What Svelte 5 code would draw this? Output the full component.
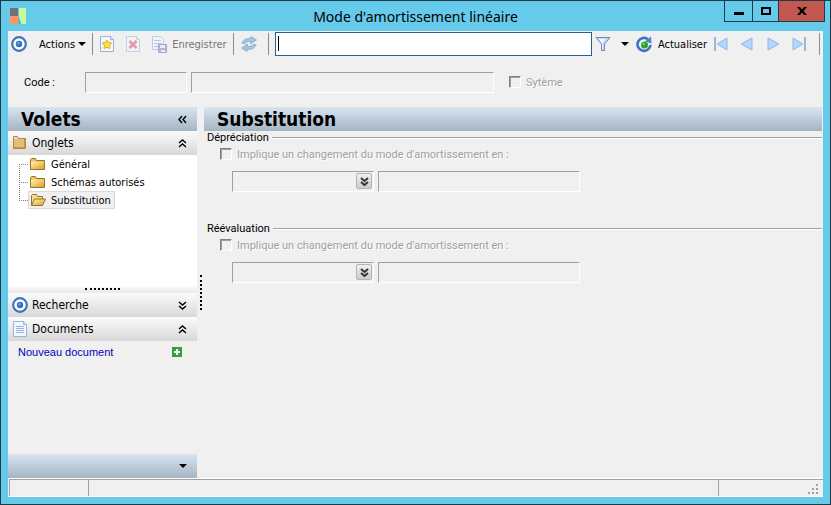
<script>
	let code = $state("");
	let label = $state("");
	let search = $state("");
	let current = $state("Substitution");
	let open = $state({ tabs: true, search: false, docs: true });

	const tabs = ["Général", "Schémas autorisés", "Substitution"];
	const groups = ["Dépréciation", "Réévaluation"];

	const nav = [
		{ name: "Premier", tri: "M14 2v12L4 8z", bar: 1 },
		{ name: "Précédent", tri: "M13 2v12L2 8z" },
		{ name: "Suivant", tri: "M3 2v12l11-6z" },
		{ name: "Dernier", tri: "M2 2v12l10-6z", bar: 13 },
	];
</script>

{#snippet target()}
	<svg width="16" height="16" viewBox="0 0 16 16" aria-hidden="true">
		<circle cx="8" cy="8" r="6.8" fill="#fff" stroke="#4173bd" stroke-width="2.2" />
		<circle cx="8" cy="8" r="3.2" fill="#2f70c4" />
		<circle cx="7.4" cy="7.2" r="1.3" fill="#69a6e5" />
	</svg>
{/snippet}

{#snippet page()}
	<path d="M1.5 .5h10l3 3v12h-13z" fill="#f1f6ff" stroke="#9db2d6" />
	<path d="M11.5 .5v3h3" fill="#d5e3f8" stroke="#9db2d6" />
{/snippet}

{#snippet folder(opened)}
	<svg width="16" height="14" viewBox="0 0 16 14" aria-hidden="true">
		<defs>
			<linearGradient id="gold" x1="0" y1="0" x2="1" y2="1">
				<stop offset="0" stop-color="#fff3b4" />
				<stop offset="1" stop-color="#dda126" />
			</linearGradient>
		</defs>
		{#if opened}
			<path d="M1.5 12.5v-10l1-1h4l1 2h5v3" fill="#f8dc83" stroke="#98732b" />
			<path d="M1.5 12.5l3-6.500h11l-3 6.500z" fill="url(#gold)" stroke="#98732b" />
		{:else}
			<path d="M.5 12.5v-10l1-1h4l1 2h8v9z" fill="#eac15c" stroke="#98732b" />
			<path d="M1 4.500h13v7.500H1z" fill="url(#gold)" />
		{/if}
	</svg>
{/snippet}

{#snippet root()}
	<svg width="16" height="14" viewBox="0 0 16 14" aria-hidden="true">
		<path d="M1.5 12.5v-12h4l1 2h7v10z" fill="#e2bf78" stroke="#b08a45" />
		<path d="M2 1h3l1 2H2z" fill="#f5dda0" />
		<path d="M12.5 3v9M2 11.5h11" stroke="#c79a42" />
	</svg>
{/snippet}

{#snippet chevrons(up)}
	<svg class="chev" width="9" height="9" viewBox="0 0 9 9" aria-hidden="true">
		<path d={up ? "M1 4l3.500-3 3.500 3M1 8l3.500-3 3.500 3" : "M1 1l3.500 3 3.500-3M1 5l3.500 3 3.500-3"} />
	</svg>
{/snippet}

<div class="window">
	<header class="titlebar">
		<svg class="logo" width="16" height="16" viewBox="0 0 16 16" aria-hidden="true">
			<path d="M0 0h8v8H0z" fill="#707378" />
			<path d="M0 8h8v8H0z" fill="#fb9566" />
			<path d="M9 0h7v16h-5L9 9z" fill="#c7fa9c" />
			<path d="M8 8l3 8H9z" fill="#689baa" />
		</svg>
		<h1>Mode d'amortissement linéaire</h1>
		<div class="controls">
			<button aria-label="Réduire"><svg width="10" height="10"><path d="M0 6h10v3H0z" /></svg></button>
			<button aria-label="Agrandir"><svg width="10" height="8"><path d="M1 1h8v6H1z" fill="none" stroke="#000" stroke-width="2" /></svg></button>
			<button class="close" aria-label="Fermer"><svg width="10" height="8"><path d="M0 0h3l2 2.500L7 0h3L6.600 4 10 8H7L5 5.500 3 8H0l3.400-4z" /></svg></button>
		</div>
	</header>

	<div class="client">
		<div class="toolbar">
			<button class="tool" aria-label="Cible">{@render target()}</button>
			<button class="tool actions">Actions <span class="arrow"></span></button>
			<span class="sep"></span>
			<div class="edit">
				<button class="tool" aria-label="Nouveau">
					<svg width="16" height="16" viewBox="0 0 16 16">
						{@render page()}
						<path d="M8 4l1.600 2.600 3 .4-2 2.200.4 3.300L8 11.300l-3 1.200.4-3.300-2-2.200 3-.4z" fill="#ffe13b" stroke="#d4b62d" />
					</svg>
				</button>
				<button class="tool off" aria-label="Supprimer" disabled>
					<svg width="16" height="16" viewBox="0 0 16 16">
						{@render page()}
						<path d="M4.500 5l7 7M11.5 5l-7 7" stroke="#cf4c5d" stroke-width="2.6" />
					</svg>
				</button>
				<button class="tool save" disabled>
					<svg class="off" width="17" height="17" viewBox="0 0 17 17" aria-hidden="true">
						<path d="M1.5 .5h8l3 3v10h-11z" fill="#f1f6ff" stroke="#8fabd8" />
						<path d="M3 4.500h7M3 7.500h8M3 10.500h5" stroke="#7f9fd0" />
						<path d="M7.500 8.500h8v8h-8z" fill="#7080b8" stroke="#5669a6" />
						<path d="M9 9h5v3H9zM10 14h4v2h-4z" fill="#e6ebfa" />
					</svg>
					Enregistrer
				</button>
			</div>
			<span class="sep"></span>
			<button class="tool sync" aria-label="Recharger">
				<svg width="18" height="16" viewBox="0 0 18 16">
					<g fill="#a4c3e2" stroke="#86a8ce" stroke-width=".8">
						<path d="M2 7.500C3 4 6 2 10.500 2.500L11 .5l5.500 3.500-6 4 .2-2.300C8 5 6 6 5 7.500z" />
						<path d="M16 8.500c-1 3.500-4 5.500-8.500 5L7 15.500 1.500 12l6-4-.2 2.300C10 11 12 10 13 8.500z" />
					</g>
				</svg>
			</button>
			<span class="sep"></span>
			<div class="search">
				<input type="text" aria-label="Recherche" bind:value={search} />
				{#if !search}<span class="caret"></span>{/if}
			</div>
			<button class="tool" aria-label="Filtrer">
				<svg width="16" height="16" viewBox="0 0 16 16">
					<path d="M1 1.500h14L9.500 8v6.500h-3V8z" fill="#c3daf7" stroke="#7189b0" />
					<path d="M4 3h6L7.800 7v6h-.6V7z" fill="#f5faff" />
				</svg>
			</button>
			<button class="tool drop" aria-label="Filtres"><span class="arrow"></span></button>
			<button class="tool refresh">
				<svg width="17" height="17" viewBox="0 0 17 17" aria-hidden="true">
					<path d="M12 3.200A6.500 6.500 0 1 0 14.500 9" fill="none" stroke="#3c72c2" stroke-width="2.6" />
					<path d="M9 5.500L15 .5l.5 7z" fill="#4b83cf" />
					<circle cx="8.500" cy="9" r="3.500" fill="#27a62d" />
					<circle cx="7.500" cy="8" r="1.300" fill="#6ed66a" />
				</svg>
				Actualiser
			</button>
			<div class="nav">
				{#each nav as item}
					<button class="tool" aria-label={item.name}>
						<svg width="16" height="16" viewBox="0 0 16 16">
							<path d={item.tri} fill="#b3d8fb" stroke="#8bb9eb" />
							{#if item.bar}<path d="M{item.bar} 1h2v14h-2z" fill="#9db5d3" />{/if}
						</svg>
					</button>
				{/each}
			</div>
			<span class="sep last"></span>
		</div>

		<div class="ident">
			<label for="code">Code :</label>
			<input id="code" class="field short" type="text" bind:value={code} disabled />
			<input class="field long" type="text" aria-label="Libellé" bind:value={label} disabled />
			<label class="check system"><input type="checkbox" disabled /><span>Sytème</span></label>
		</div>

		<div class="body">
			<aside>
				<div class="bar">
					<h2>Volets</h2>
					<button class="collapse" aria-label="Replier">
						<svg class="chev" width="9" height="9" viewBox="0 0 9 9"><path d="M4 1L1 4.500 4 8M8 1L5 4.500 8 8" /></svg>
					</button>
				</div>

				<button class="section" onclick={() => (open.tabs = !open.tabs)}>
					{@render root()}
					<span>Onglets</span>
					{@render chevrons(open.tabs)}
				</button>
				{#if open.tabs}
					<ul class="tree">
						{#each tabs as tab}
							<li>
								<button class:selected={current == tab} onclick={() => (current = tab)}>
									{@render folder(current == tab)}
									<span>{tab}</span>
								</button>
							</li>
						{/each}
					</ul>
				{/if}
				<div class="grip"></div>

				<button class="section" onclick={() => (open.search = !open.search)}>
					{@render target()}
					<span>Recherche</span>
					{@render chevrons(open.search)}
				</button>
				<button class="section" onclick={() => (open.docs = !open.docs)}>
					<svg width="16" height="16" viewBox="0 0 16 16" aria-hidden="true">
						{@render page()}
						<path d="M4 5.500h8M4 7.500h8M4 9.500h8M4 11.500h8" stroke="#94b4e4" />
					</svg>
					<span>Documents</span>
					{@render chevrons(open.docs)}
				</button>
				{#if open.docs}
					<div class="doc">
						<a href="#nouveau">Nouveau document</a>
						<button class="add" aria-label="Ajouter">
							<svg width="10" height="10"><path d="M0 0h10v10H0z" fill="#3f9b35" /><path d="M4 2h2v2h2v2H6v2H4V6H2V4h2z" fill="#fff" /></svg>
						</button>
					</div>
				{/if}
				<div class="bar foot">
					<button class="collapse" aria-label="Plus de volets"><span class="arrow"></span></button>
				</div>
			</aside>

			<div class="splitter"></div>

			<main>
				<div class="bar"><h2>{current}</h2></div>
				{#each groups as group}
					<section class="group">
						<h3>{group}</h3>
						<label class="check"><input type="checkbox" disabled /><span>Implique un changement du mode d'amortissement en :</span></label>
						<div class="row">
							<div class="combo">
								<select class="field" aria-label="Mode {group}" disabled><option></option></select>
								<span class="combo-btn">{@render chevrons(false)}</span>
							</div>
							<input class="field wide" type="text" aria-label="Libellé {group}" disabled />
						</div>
					</section>
				{/each}
			</main>
		</div>

		<footer class="status">
			<span class="first"></span>
			<span class="middle"></span>
			<span class="end">
				<svg width="11" height="11" viewBox="0 0 11 11" aria-hidden="true">
					<path d="M8 0h2v2H8zM8 4h2v2H8zM4 4h2v2H4zM8 8h2v2H8zM4 8h2v2H4zM0 8h2v2H0z" fill="#a0a0a0" />
				</svg>
			</span>
		</footer>
	</div>
</div>

<style>
:global(body) {
  margin: 0;
}

.window {
  display: flex;
  flex-direction: column;
  box-sizing: border-box;
  min-height: 100vh;
  padding: 0 7px 7px;
  border: 1px solid #1f3b49;
  background: #66caea;
  color: #000;
  font-family: "DejaVu Sans Condensed", "DejaVu Sans", sans-serif;
  font-size: 12px;
}

button {
  display: flex;
  align-items: center;
  margin: 0;
  padding: 0;
  border: 0;
  background: none;
  color: inherit;
  font: inherit;
}

svg {
  display: block;
  flex: none;
}

h1, h2, h3 {
  margin: 0;
}

/* title bar */
.titlebar {
  display: grid;
  grid-template-columns: 1fr auto 1fr;
  align-items: center;
  height: 30px;
}

.logo {
  margin-left: 2px;
}

h1 {
  font: 14px "Noto Sans", sans-serif;
}

.controls {
  display: flex;
  justify-self: end;
  align-self: start;
  margin-right: -2px;
  border: 1px solid #1f3b49;
  border-top: 0;
}

.controls button {
  justify-content: center;
  width: 27px;
  height: 20px;
}

.controls button + button {
  width: 26px;
  border-left: 1px solid #1f3b49;
}

.controls .close {
  width: 46px;
  background: #c35850;
}

/* toolbar */
.client {
  display: flex;
  flex: 1;
  flex-direction: column;
  background: #f0f0f0;
}

.toolbar {
  display: flex;
  align-items: center;
  height: 26px;
  padding: 0 3px;
  font-size: 11px;
}

.actions {
  gap: 3px;
  margin-left: 12px;
}

.arrow {
  border: 4px solid transparent;
  border-top-color: #000;
  border-bottom: 0;
}

.sep {
  width: 1px;
  height: 22px;
  margin: 0 6px;
  background: #8c8c8c;
}

.sep.last {
  margin: 0 0 0 auto;
}

.edit {
  display: flex;
  gap: 10px;
}

.off {
  opacity: .5;
}

.save {
  gap: 4px;
  color: #777;
}

.sync {
  margin-right: 4px;
}

.search {
  display: flex;
  flex: 1;
  position: relative;
  margin-right: 3px;
}

.search input {
  width: 100%;
  height: 24px;
  box-sizing: border-box;
  padding: 0 4px;
  border: 1px solid #2b5f94;
  background: #fff;
  font: inherit;
  outline: 0;
}

.caret {
  position: absolute;
  top: 4px;
  left: 3px;
  width: 1px;
  height: 15px;
  background: #000;
}

.drop {
  margin: 0 7px 0 10px;
}

.refresh {
  gap: 5px;
}

.nav {
  display: flex;
  gap: 10px;
  margin: 0 12px 0 6px;
}

/* identification */
.ident {
  display: flex;
  align-items: center;
  height: 50px;
  padding: 0 16px;
  font: 11px Roboto, sans-serif;
}

.ident > label:first-child {
  width: 61px;
}

.field {
  box-sizing: border-box;
  height: 21px;
  padding: 0 4px;
  border: 1px solid;
  border-color: #a0a0a0 #fff #fff #a0a0a0;
  border-radius: 0;
  background: #f0f0f0;
  font: inherit;
  opacity: 1;
  appearance: none;
}

.short {
  width: 102px;
}

.long {
  width: 303px;
  margin-left: 4px;
}

.check {
  display: flex;
  align-items: center;
  gap: 5px;
  color: #a0a0a0;
  text-shadow: 1px 1px #fff;
}

.check input {
  box-sizing: border-box;
  width: 12px;
  height: 12px;
  margin: 0;
  border: 1px solid;
  border-color: #808080 #fff #fff #808080;
  box-shadow: inset 1px 1px #a0a0a0;
  appearance: none;
}

.system {
  margin-left: 15px;
}

/* panes */
.body {
  display: flex;
  flex: 1;
}

aside {
  display: flex;
  flex-direction: column;
  width: 189px;
}

.bar {
  display: flex;
  align-items: center;
  justify-content: space-between;
  height: 24px;
  padding: 0 10px 0 13px;
  background: linear-gradient(#d8e5f1, #a5b4c3);
}

.bar h2 {
  font-size: 19px;
  line-height: 24px;
}

.foot {
  justify-content: flex-end;
  margin-top: auto;
}

.chev path {
  fill: none;
  stroke: #000;
  stroke-width: 1.4;
}

.section {
  gap: 4px;
  height: 24px;
  padding: 0 10px 0 4px;
  background: linear-gradient(#fcfcfc, #d8d8d8);
}

.section span {
  flex: 1;
  text-align: left;
}

.tree {
  height: 131px;
  margin: 0;
  padding: 0;
  background: #fff;
  list-style: none;
}

.tree li {
  display: flex;
  position: relative;
  height: 18px;
  padding-left: 20px;
}

.tree li::before {
  content: "";
  position: absolute;
  left: 11px;
  top: -9px;
  width: 9px;
  height: 19px;
  box-sizing: border-box;
  border: 1px dotted #808080;
  border-width: 0 0 1px 1px;
}

.tree li:first-child::before {
  top: 9px;
  height: 1px;
}

.tree button {
  gap: 5px;
  padding: 0 3px 0 1px;
  border: 1px solid transparent;
  font-size: 11px;
}

.tree .selected {
  border-color: #d9d9d9;
  background: #f0f0f0;
}

.grip {
  height: 7px;
  background: linear-gradient(#fcfcfc, #e8e8e8);
}

.grip::after {
  content: "";
  display: block;
  width: 35px;
  margin: 0 auto;
  padding-top: 2px;
  border-bottom: 2px dotted #000;
}

.doc {
  display: flex;
  align-items: center;
  justify-content: space-between;
  height: 21px;
  padding: 0 15px 0 10px;
  font: 11px "Liberation Sans", sans-serif;
}

.doc a {
  color: #0000c0;
  text-decoration: none;
}

.splitter {
  display: flex;
  align-items: center;
  justify-content: center;
  width: 7px;
}

.splitter::after {
  content: "";
  height: 35px;
  border-left: 2px dotted #000;
}

main {
  flex: 1;
  padding-right: 1px;
}

.group {
  height: 91px;
  font: 11px Roboto, sans-serif;
}

h3 {
  display: flex;
  align-items: center;
  gap: 3px;
  padding-left: 3px;
  font: inherit;
  line-height: 14px;
}

h3::after {
  content: "";
  flex: 1;
  height: 1px;
  background: #a0a0a0;
  border-bottom: 1px solid #fff;
}

.group .check {
  height: 18px;
  padding-left: 16px;
}

.row {
  display: flex;
  gap: 4px;
  margin: 8px 0 0 28px;
}

.combo {
  position: relative;
}

.combo select {
  display: block;
  width: 142px;
}

.combo-btn {
  display: flex;
  align-items: center;
  justify-content: center;
  position: absolute;
  top: 2px;
  right: 2px;
  box-sizing: border-box;
  width: 16px;
  height: 16px;
  border: 1px solid #b4b4b4;
  border-radius: 2px;
  background: linear-gradient(#f0f0f0, #ccc);
}

.combo-btn :global(path) {
  stroke: #333;
  stroke-width: 2;
}

.wide {
  width: 202px;
}

/* status bar */
.status {
  display: flex;
  height: 17px;
  border-top: 1px solid #fff;
  border-bottom: 1px solid #fff;
}

.status span {
  border-top: 1px solid #a0a0a0;
  border-left: 1px solid #a0a0a0;
}

.first {
  width: 78px;
  margin-left: 1px;
}

.middle {
  flex: 1;
}

.end {
  display: flex;
  align-items: flex-end;
  justify-content: flex-end;
  box-sizing: border-box;
  width: 105px;
  padding: 0 4px 1px 0;
}
</style>
